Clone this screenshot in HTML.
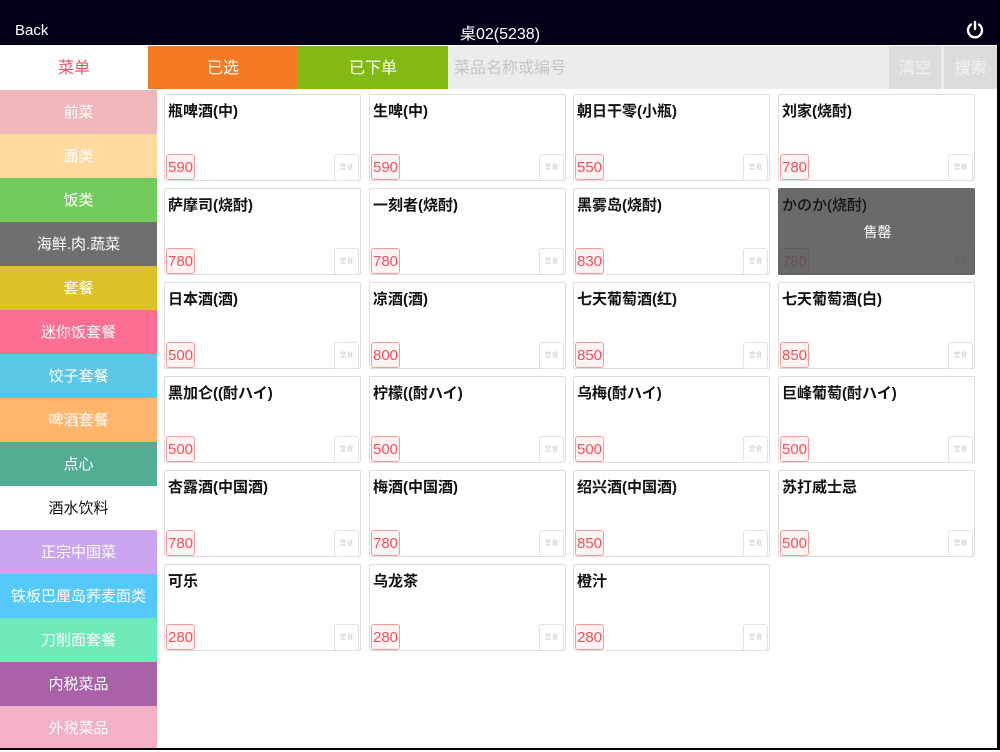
<!DOCTYPE html>
<html><head><meta charset="utf-8">
<style>
*{margin:0;padding:0;box-sizing:border-box}
body{width:1000px;height:750px;overflow:hidden;background:#fff;font-family:"Liberation Sans","Noto Sans CJK SC",sans-serif;position:relative}
.hdr{position:absolute;left:0;top:0;width:1000px;height:45px;background:#03011a}
.back{position:absolute;left:15px;top:22px;color:#fff;font-size:15px}
.title{position:absolute;left:0;width:1000px;top:20px;text-align:center;color:#fff;font-size:16px}
.tab{position:absolute;top:46px;height:43px;line-height:45px;text-align:center;font-size:16px;color:#fff}
.side{position:absolute;left:0;width:157px;height:44px;line-height:46px;text-align:center;color:#fff;font-size:15px}
.card{position:absolute;width:197px;height:87px;border:1px solid #ddd;border-radius:2px;background:#fff}
.card .n{position:absolute;left:3px;top:5px;font-size:15px;font-weight:bold;color:#111}
.card .p{position:absolute;left:1px;top:59px;width:29px;height:26px;border:1px solid #f59a9a;border-radius:3px;background:#fff3f3;color:#f0525c;font-size:15px;line-height:26px;text-align:center}
.card .t{position:absolute;right:1px;top:59px;width:25px;height:27px;border:1px solid #e2e2e2;border-radius:3px;color:#ccc;font-size:7px;line-height:25px;text-align:center}
.so{position:absolute;inset:-1px;background:rgba(80,80,80,.85);border-radius:2px}
</style></head><body>
<div class="hdr">
<div class="back">Back</div>
<div class="title">桌02(5238)</div>
<svg style="position:absolute;left:965px;top:20px" width="20" height="20" viewBox="0 0 20 20"><path d="M6 4.5A7 7 0 1 0 14 4.5" fill="none" stroke="#fff" stroke-width="2.4" stroke-linecap="round"/><path d="M10 2v7" stroke="#fff" stroke-width="2.4" stroke-linecap="round"/></svg>
</div>
<div style="position:absolute;left:997px;top:0;width:3px;height:750px;background:#000"></div>
<div style="position:absolute;left:0;top:748px;width:1000px;height:2px;background:#000"></div>
<div class="tab" style="left:0;width:148px;background:#fff;color:#f0525c">菜单</div>
<div class="tab" style="left:148px;width:150px;background:#f47b22">已选</div>
<div class="tab" style="left:298px;width:150px;background:#80ba12">已下单</div>
<div class="tab" style="left:448px;width:549px;background:#ececec;color:#c4c4c4;text-align:left;padding-left:6px">菜品名称或编号</div>
<div class="tab" style="left:889px;width:52px;background:#dcdcdc;color:#f2f2f2">清空</div>
<div class="tab" style="left:944px;width:53px;background:#dcdcdc;color:#f2f2f2">搜索</div>

<div class="side" style="top:90px;background:#efb7b9">前菜</div>
<div class="side" style="top:134px;background:#fed9a0">面类</div>
<div class="side" style="top:178px;background:#74cb5d">饭类</div>
<div class="side" style="top:222px;background:#6f6f6f">海鲜.肉.蔬菜</div>
<div class="side" style="top:266px;background:#dfc22b">套餐</div>
<div class="side" style="top:310px;background:#fd6f92">迷你饭套餐</div>
<div class="side" style="top:354px;background:#5bc6e6">饺子套餐</div>
<div class="side" style="top:398px;background:#feb56c">啤酒套餐</div>
<div class="side" style="top:442px;background:#53ad93">点心</div>
<div class="side" style="top:486px;background:#fff;color:#111">酒水饮料</div>
<div class="side" style="top:530px;background:#cba5f0">正宗中国菜</div>
<div class="side" style="top:574px;background:#55c8fe">铁板巴厘岛荞麦面类</div>
<div class="side" style="top:618px;background:#6deab8">刀削面套餐</div>
<div class="side" style="top:662px;background:#a962a8">内税菜品</div>
<div class="side" style="top:706px;background:#f3b0c8;height:42px">外税菜品</div>

<div class="card" style="left:164px;top:94px"><div class="n">瓶啤酒(中)</div><div class="p">590</div><div class="t">堂食</div></div>
<div class="card" style="left:369px;top:94px"><div class="n">生啤(中)</div><div class="p">590</div><div class="t">堂食</div></div>
<div class="card" style="left:573px;top:94px"><div class="n">朝日干零(小瓶)</div><div class="p">550</div><div class="t">堂食</div></div>
<div class="card" style="left:778px;top:94px"><div class="n">刘家(烧酎)</div><div class="p">780</div><div class="t">堂食</div></div>

<div class="card" style="left:164px;top:188px"><div class="n">萨摩司(烧酎)</div><div class="p">780</div><div class="t">堂食</div></div>
<div class="card" style="left:369px;top:188px"><div class="n">一刻者(烧酎)</div><div class="p">780</div><div class="t">堂食</div></div>
<div class="card" style="left:573px;top:188px"><div class="n">黑雾岛(烧酎)</div><div class="p">830</div><div class="t">堂食</div></div>
<div class="card" style="left:778px;top:188px"><div class="n">かのか(烧酎)</div><div class="p">780</div><div class="t">堂食</div><div class="so"></div><div class="n" style="font-weight:normal;color:#111">かのか(烧酎)</div><div style="position:absolute;left:0;width:197px;top:33px;text-align:center;color:#fff;font-size:14px">售罄</div></div>

<div class="card" style="left:164px;top:282px"><div class="n">日本酒(酒)</div><div class="p">500</div><div class="t">堂食</div></div>
<div class="card" style="left:369px;top:282px"><div class="n">凉酒(酒)</div><div class="p">800</div><div class="t">堂食</div></div>
<div class="card" style="left:573px;top:282px"><div class="n">七天葡萄酒(红)</div><div class="p">850</div><div class="t">堂食</div></div>
<div class="card" style="left:778px;top:282px"><div class="n">七天葡萄酒(白)</div><div class="p">850</div><div class="t">堂食</div></div>

<div class="card" style="left:164px;top:376px"><div class="n">黑加仑((酎ハイ)</div><div class="p">500</div><div class="t">堂食</div></div>
<div class="card" style="left:369px;top:376px"><div class="n">柠檬((酎ハイ)</div><div class="p">500</div><div class="t">堂食</div></div>
<div class="card" style="left:573px;top:376px"><div class="n">乌梅(酎ハイ)</div><div class="p">500</div><div class="t">堂食</div></div>
<div class="card" style="left:778px;top:376px"><div class="n">巨峰葡萄(酎ハイ)</div><div class="p">500</div><div class="t">堂食</div></div>

<div class="card" style="left:164px;top:470px"><div class="n">杏露酒(中国酒)</div><div class="p">780</div><div class="t">堂食</div></div>
<div class="card" style="left:369px;top:470px"><div class="n">梅酒(中国酒)</div><div class="p">780</div><div class="t">堂食</div></div>
<div class="card" style="left:573px;top:470px"><div class="n">绍兴酒(中国酒)</div><div class="p">850</div><div class="t">堂食</div></div>
<div class="card" style="left:778px;top:470px"><div class="n">苏打威士忌</div><div class="p">500</div><div class="t">堂食</div></div>

<div class="card" style="left:164px;top:564px"><div class="n">可乐</div><div class="p">280</div><div class="t">堂食</div></div>
<div class="card" style="left:369px;top:564px"><div class="n">乌龙茶</div><div class="p">280</div><div class="t">堂食</div></div>
<div class="card" style="left:573px;top:564px"><div class="n">橙汁</div><div class="p">280</div><div class="t">堂食</div></div>
</body></html>
